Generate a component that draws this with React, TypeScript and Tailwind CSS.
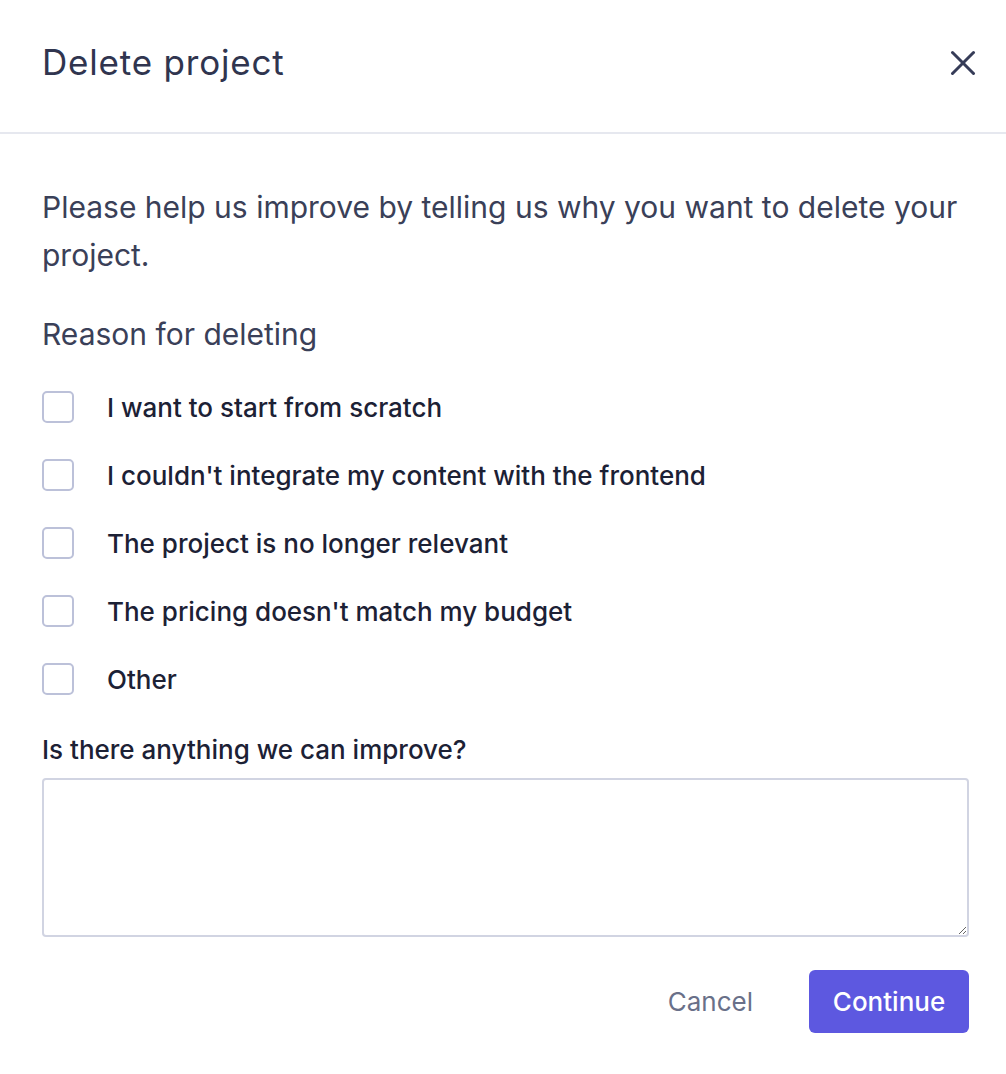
import { X } from 'lucide-react';

const reasons = [
  'I want to start from scratch',
  "I couldn't integrate my content with the frontend",
  'The project is no longer relevant',
  "The pricing doesn't match my budget",
  'Other',
];

export default function App() {
  return (
    <div className="w-[1006px] min-h-[1074px] bg-white font-['Inter',sans-serif]">
      {/* Header */}
      <div className="h-[134px] flex items-center justify-between pl-[42px] pr-[22px] border-b-2 border-[#e6e8ef]">
        <h2 className="text-[35px] font-normal text-[#30354f] tracking-[0.8px] -mt-[8px]">Delete project</h2>
        <button className="text-[#363c58] -mt-[6px]">
          <X size={42} strokeWidth={1.75} />
        </button>
      </div>

      {/* Body */}
      <div className="pl-[42px] pr-[37px] pt-[49px] pb-[41px]">
        <p className="text-[30px] leading-[48px] text-[#3a4058]">
          Please help us improve by telling us why you want to delete your project.
        </p>

        <p className="mt-[31px] text-[30px] leading-[48px] text-[#3a4058]">Reason for deleting</p>

        <div className="mt-[33px] flex flex-col gap-[36px]">
          {reasons.map((r) => (
            <label key={r} className="flex items-center h-[32px] gap-[33px]">
              <span className="w-[32px] h-[32px] rounded-[5px] border-2 border-[#bcc1d9] bg-white shrink-0" />
              <span className="text-[26px] font-medium text-[#1c2135]">{r}</span>
            </label>
          ))}
        </div>

        <p className="mt-[37px] text-[26px] leading-[36px] font-medium text-[#1c2135]">
          Is there anything we can improve?
        </p>
        <textarea className="mt-[10px] block w-[927px] h-[159px] rounded-[4px] border-2 border-[#d1d4e2] outline-none" />

        <div className="mt-[33px] flex items-center justify-end gap-[28px]">
          <button className="px-[28px] h-[63px] text-[26px] text-[#697089]">Cancel</button>
          <button className="w-[160px] h-[63px] rounded-[6px] bg-[#5d58e0] text-white text-[26px] font-medium">
            Continue
          </button>
        </div>
      </div>
    </div>
  );
}
